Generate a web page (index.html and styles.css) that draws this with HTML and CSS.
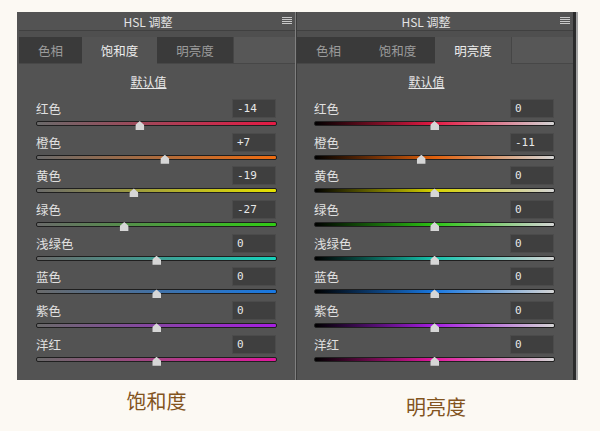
FILE: index.html
```html
<!DOCTYPE html>
<html lang="zh-CN">
<head>
    <meta charset="UTF-8">
    <title>HSL 调整</title>
    <link rel="stylesheet" href="styles.css">
</head>
<body>
    <div class="sheet">
        <!-- 饱和度 -->
        <div class="column">
            <div class="panel panel-left">
                <div class="panel-head">
                    <span class="panel-title">HSL 调整</span>
                    <svg class="menu-icon" width="10" height="8" viewBox="0 0 10 8">
                        <rect y="0" width="10" height="1" />
                        <rect y="2" width="10" height="1" />
                        <rect y="4" width="10" height="1" />
                        <rect y="6" width="10" height="1" />
                    </svg>
                </div>
                <div class="panel-strip"></div>
                <div class="tabs">
                    <div class="tab tab-1">色相</div>
                    <div class="tab tab-2 active">饱和度</div>
                    <div class="tab tab-3">明亮度</div>
                    <div class="tab-rest"></div>
                </div>
                <div class="panel-body sat">
                    <div class="default-link"><span>默认值</span></div>

                    <div class="row">
                        <div class="row-top"><span class="label">红色</span><span class="value">-14</span></div>
                        <div class="track red"><i class="thumb" style="left: 43%"></i></div>
                    </div>
                    <div class="row">
                        <div class="row-top"><span class="label">橙色</span><span class="value">+7</span></div>
                        <div class="track orange"><i class="thumb" style="left: 53.5%"></i></div>
                    </div>
                    <div class="row">
                        <div class="row-top"><span class="label">黄色</span><span class="value">-19</span></div>
                        <div class="track yellow"><i class="thumb" style="left: 40.5%"></i></div>
                    </div>
                    <div class="row">
                        <div class="row-top"><span class="label">绿色</span><span class="value">-27</span></div>
                        <div class="track green"><i class="thumb" style="left: 36.5%"></i></div>
                    </div>
                    <div class="row">
                        <div class="row-top"><span class="label">浅绿色</span><span class="value">0</span></div>
                        <div class="track aqua"><i class="thumb" style="left: 50%"></i></div>
                    </div>
                    <div class="row">
                        <div class="row-top"><span class="label">蓝色</span><span class="value">0</span></div>
                        <div class="track blue"><i class="thumb" style="left: 50%"></i></div>
                    </div>
                    <div class="row">
                        <div class="row-top"><span class="label">紫色</span><span class="value">0</span></div>
                        <div class="track purple"><i class="thumb" style="left: 50%"></i></div>
                    </div>
                    <div class="row">
                        <div class="row-top"><span class="label">洋红</span><span class="value">0</span></div>
                        <div class="track magenta"><i class="thumb" style="left: 50%"></i></div>
                    </div>
                </div>
            </div>
            <div class="caption">饱和度</div>
        </div>

        <!-- 明亮度 -->
        <div class="column">
            <div class="panel panel-right">
                <div class="panel-head">
                    <span class="panel-title">HSL 调整</span>
                    <svg class="menu-icon" width="10" height="8" viewBox="0 0 10 8">
                        <rect y="0" width="10" height="1" />
                        <rect y="2" width="10" height="1" />
                        <rect y="4" width="10" height="1" />
                        <rect y="6" width="10" height="1" />
                    </svg>
                </div>
                <div class="panel-strip"></div>
                <div class="tabs">
                    <div class="tab tab-1">色相</div>
                    <div class="tab tab-2">饱和度</div>
                    <div class="tab tab-3 active">明亮度</div>
                    <div class="tab-rest"></div>
                </div>
                <div class="panel-body lum">
                    <div class="default-link"><span>默认值</span></div>

                    <div class="row">
                        <div class="row-top"><span class="label">红色</span><span class="value">0</span></div>
                        <div class="track red"><i class="thumb" style="left: 50%"></i></div>
                    </div>
                    <div class="row">
                        <div class="row-top"><span class="label">橙色</span><span class="value">-11</span></div>
                        <div class="track orange"><i class="thumb" style="left: 44.5%"></i></div>
                    </div>
                    <div class="row">
                        <div class="row-top"><span class="label">黄色</span><span class="value">0</span></div>
                        <div class="track yellow"><i class="thumb" style="left: 50%"></i></div>
                    </div>
                    <div class="row">
                        <div class="row-top"><span class="label">绿色</span><span class="value">0</span></div>
                        <div class="track green"><i class="thumb" style="left: 50%"></i></div>
                    </div>
                    <div class="row">
                        <div class="row-top"><span class="label">浅绿色</span><span class="value">0</span></div>
                        <div class="track aqua"><i class="thumb" style="left: 50%"></i></div>
                    </div>
                    <div class="row">
                        <div class="row-top"><span class="label">蓝色</span><span class="value">0</span></div>
                        <div class="track blue"><i class="thumb" style="left: 50%"></i></div>
                    </div>
                    <div class="row">
                        <div class="row-top"><span class="label">紫色</span><span class="value">0</span></div>
                        <div class="track purple"><i class="thumb" style="left: 50%"></i></div>
                    </div>
                    <div class="row">
                        <div class="row-top"><span class="label">洋红</span><span class="value">0</span></div>
                        <div class="track magenta"><i class="thumb" style="left: 50%"></i></div>
                    </div>
                </div>
            </div>
            <div class="caption caption-low">明亮度</div>
        </div>
    </div>
</body>
</html>
```

FILE: styles.css
```css
body {
    margin: 0;
    background-color: #fcf9f3;
    font-family: "Noto Sans CJK SC", "DejaVu Sans", sans-serif;
}
.sheet {
    display: flex;
    padding: 12px 0 0 17px;
}
.column {
    display: flex;
    flex-direction: column;
}

/* panel frame */
.panel {
    width: 276px;
    background-color: #535353;
}
.panel-left {
    padding-left: 2px;
    border-right: 1px solid #808080;
}
.panel-right {
    border-left: 1px solid #3c3c3c;
    border-right: 3px solid #2b2b2b;
    box-shadow: 2px 0 0 #a4a4a4;
}
.panel-head {
    height: 18px;
    display: flex;
    align-items: center;
    justify-content: center;
    padding-right: 18px;
    position: relative;
    border-bottom: 1px solid #404040;
}
.panel-title {
    font-size: 12px;
    color: #e4e4e4;
}
.menu-icon {
    position: absolute;
    right: 3px;
    top: 5px;
    fill: #c8c8c8;
}
.panel-strip {
    height: 6px;
    background-color: #4f4f4f;
}

/* tabs */
.tabs {
    display: flex;
    height: 27px;
}
.tab {
    display: flex;
    align-items: center;
    justify-content: center;
    background-color: #3a3a3a;
    color: #9c9c9c;
    font-size: 12.5px;
    border-bottom: 1px solid #474747;
}
.tab.active {
    background-color: #535353;
    color: #ececec;
    border-bottom-color: #535353;
}
.tab-1 { width: 63px; }
.tab-2 { width: 75px; }
.tab-3 { width: 76px; }
.tab-rest {
    flex: 1;
    background-color: #575757;
    border-left: 1px solid #464646;
    border-bottom: 1px solid #474747;
}

/* sliders */
.panel-body {
    padding: 11px 18px 11px 17px;
}
.default-link {
    height: 14px;
    margin-bottom: 10px;
    padding-right: 16px;
    text-align: center;
    font-size: 12px;
    line-height: 14px;
    color: #e8e8e8;
}
.default-link span {
    text-decoration: underline;
}
.row {
    height: 33.7px;
}
.row-top {
    display: flex;
    justify-content: space-between;
    align-items: center;
    height: 19px;
}
.label {
    font-size: 12.5px;
    color: #e0e0e0;
}
.value {
    width: 38px;
    height: 17px;
    padding-left: 4px;
    margin-right: 1px;
    background-color: #3f3f3f;
    border: 1px solid #4b4b4b;
    font-family: "DejaVu Sans Mono", monospace;
    font-size: 11px;
    line-height: 17px;
    color: #e8e8e8;
}
.track {
    position: relative;
    height: 3px;
    margin-top: 3px;
    border: 1px solid #1f1f1f;
    border-radius: 2px;
}
.thumb {
    position: absolute;
    top: -1px;
    width: 9px;
    height: 9px;
    transform: translateX(-50%);
    background-color: #d6d6d6;
    clip-path: polygon(50% 0, 100% 45%, 100% 100%, 0 100%, 0 45%);
}

/* saturation: grey to full colour */
.sat .red { background: linear-gradient(to right, #6a6a6a, #e41a44); }
.sat .orange { background: linear-gradient(to right, #6a6a6a, #ef6c10); }
.sat .yellow { background: linear-gradient(to right, #6a6a6a, #e6e200); }
.sat .green { background: linear-gradient(to right, #6a6a6a, #30cc14); }
.sat .aqua { background: linear-gradient(to right, #6a6a6a, #16d2bc); }
.sat .blue { background: linear-gradient(to right, #6a6a6a, #1878e2); }
.sat .purple { background: linear-gradient(to right, #6a6a6a, #a61ee2); }
.sat .magenta { background: linear-gradient(to right, #6a6a6a, #e2189e); }

/* lightness: black, colour, white */
.lum .red { background: linear-gradient(to right, #000, #e41a44 50%, #d4d4d4); }
.lum .orange { background: linear-gradient(to right, #000, #e0600c 50%, #d4d4d4); }
.lum .yellow { background: linear-gradient(to right, #000, #d6d200 50%, #d4d4d4); }
.lum .green { background: linear-gradient(to right, #000, #2cc414 50%, #d4d4d4); }
.lum .aqua { background: linear-gradient(to right, #000, #16c4ae 50%, #d4d4d4); }
.lum .blue { background: linear-gradient(to right, #000, #1878e2 50%, #d4d4d4); }
.lum .purple { background: linear-gradient(to right, #000, #a61ee2 50%, #d4d4d4); }
.lum .magenta { background: linear-gradient(to right, #000, #e2189e 50%, #d4d4d4); }

.caption {
    margin-top: 9px;
    text-align: center;
    font-size: 20px;
    line-height: 24px;
    color: #83541e;
}
.caption-low {
    margin-top: 15px;
}
```
